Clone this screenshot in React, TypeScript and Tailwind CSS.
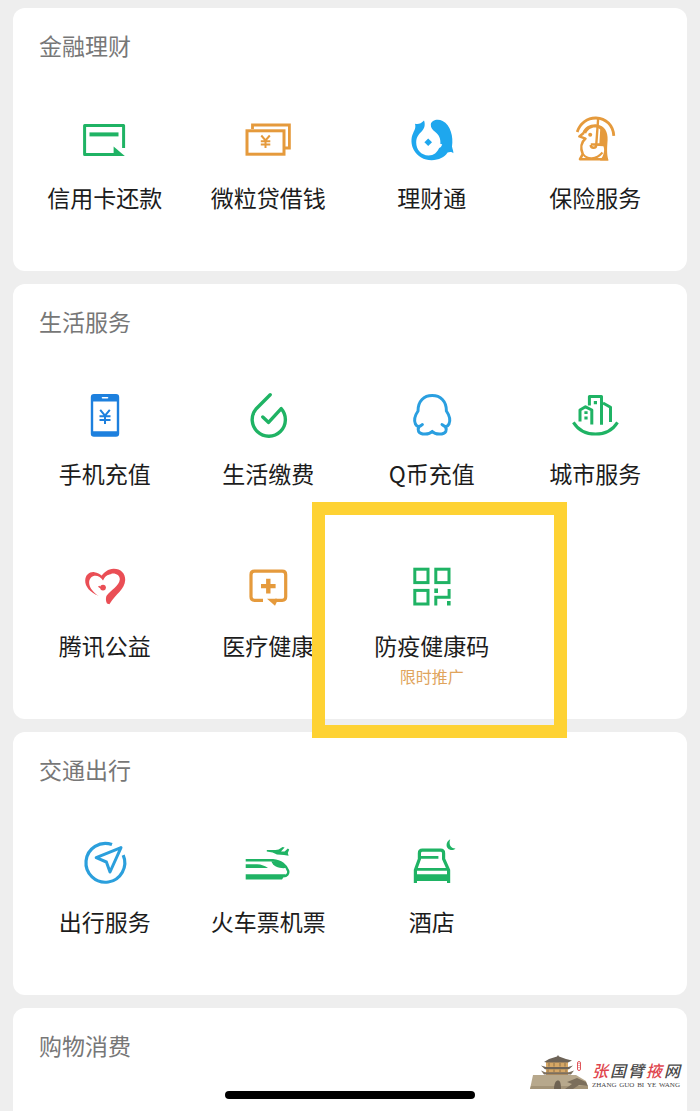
import type { ReactNode } from "react";
import { clsx } from "clsx";

type Service = {
  label: string;
  icon: ReactNode;
  note?: string;
  highlighted?: boolean;
};

type ServiceGroup = {
  title: string;
  items: Service[];
};

const GREEN = "#1fb364";
const ORANGE = "#e59a3c";
const SKY = "#1ea7ee";
const BLUE = "#1d80de";
const RED = "#ea4e55";

function Icon({ color, children }: { color: string; children: ReactNode }) {
  return (
    <svg
      viewBox="0 0 48 48"
      className="size-12 overflow-visible"
      fill="none"
      stroke={color}
      strokeWidth="3"
      aria-hidden="true"
    >
      {children}
    </svg>
  );
}

function CardIcon() {
  return (
    <Icon color={GREEN}>
      <path d="M42.6 32V9.5H3.6V38.5H36" strokeLinejoin="round" />
      <path d="M8.5 18.4H37.5" strokeWidth="4" />
      <path d="M32.6 30.5L43.8 40H32.6Z" fill={GREEN} stroke="none" />
    </Icon>
  );
}

function CashIcon() {
  return (
    <Icon color={ORANGE}>
      <path d="M8.5 13V9H45.4V32H41" strokeWidth="2.8" />
      <rect x="3" y="14.8" width="37" height="23.4" />
      <path d="M17.3 19.5L21.5 24.5L25.8 19.5M21.5 24.5V32M16.8 25.3H26.3M16.8 28.6H26.3" strokeWidth="2" />
    </Icon>
  );
}

function FishIcon() {
  return (
    <Icon color={SKY}>
      <path
        d="M16 4.6C13 7.8 10.5 8.4 7 7.8C8 12 6.6 14 5.2 17C2.6 22 3 29 5.8 34C9.3 40.5 16 44.2 23.6 44.2C31 44.2 36.5 41.2 39.6 36.6C42 35.5 44 36 45.4 37.2C45.4 34.5 44.4 33 44 30.5C45.6 21 42.6 9 34.6 5C29.5 2.5 23.3 4.4 22.8 8.4C22.6 11.6 24.4 13.6 27 15.8C31 19 32.8 22.5 32.4 28L34.2 28.2C33.5 30.8 32.4 31.5 31.2 32C29 36.5 26 39.4 20.5 39.4C13 39.4 8.2 33.5 8.2 26.5C8.2 21.5 10.6 18.5 13.4 15.8C16.4 12.8 17.6 9 16 4.6Z"
        fill={SKY}
        stroke="none"
      />
      <path d="M20.2 22.4L24 26.2L20.2 30L16.4 26.2Z" fill={SKY} stroke="none" />
    </Icon>
  );
}

function UmbrellaIcon() {
  return (
    <Icon color={ORANGE}>
      <path d="M6.2 16C9 7 16.5 1.8 25 2C35 2.2 42.2 9.5 42.8 19.8" strokeWidth="2.8" />
      <path d="M27.2 2L25.2 29.5C24.8 32.6 20 32.6 19.6 29" strokeWidth="2.4" />
      <path d="M11.5 16.5C13.5 10.5 20 7.6 26 8.4C33.5 9.6 37 15.5 36.6 24C36.2 31 35.4 38 37.6 44.4H29C33 39.5 34 34 32.4 30.2L19.8 29.6V27.2H28.4L29.2 13.6C24.6 9.8 17.6 11.6 15.2 17.6Z" fill={ORANGE} stroke="none" />
      <path d="M13 16.8L8.4 20.4L14.5 22.6C10.5 26 9 32 11.8 38.2L9 43.2H37" strokeWidth="2.6" strokeLinejoin="round" />
      <path d="M12 38C16 43.8 25 44 31.5 36.5" strokeWidth="2" />
      <circle cx="19.2" cy="18.8" r="2" fill={ORANGE} stroke="none" />
    </Icon>
  );
}

function PhoneIcon() {
  return (
    <Icon color={BLUE}>
      <path
        d="M13 2H35Q38.2 2 38.2 5.2V41.5Q38.2 44.7 35 44.7H13Q9.8 44.7 9.8 41.5V5.2Q9.8 2 13 2ZM12.2 9.6V39.2H35.8V9.6Z"
        fill={BLUE}
        fillRule="evenodd"
        stroke="none"
      />
      <path d="M21.5 5.8H26.5" stroke="#fff" strokeWidth="1.6" strokeLinecap="round" />
      <path d="M19.2 17.8L24 23.6L28.8 17.8M24 23.6V32M18.5 24.2H29.5M18.5 28H29.5" strokeWidth="2" />
    </Icon>
  );
}

function DropIcon() {
  return (
    <Icon color={GREEN}>
      <path
        d="M26.2 2.8L12 17A16.6 16.6 0 1 0 37.2 16.6L24.6 30.4L18.8 25"
        strokeWidth="3.4"
        strokeLinecap="round"
        strokeLinejoin="round"
      />
    </Icon>
  );
}

function PenguinIcon() {
  return (
    <Icon color="#2a9fe0">
      <path
        d="M14.4 32.6C10.6 34.2 9.6 37 10.6 39.4C12.5 42.8 21 43 24.2 39.4C27.4 43 35.9 42.8 37.8 39.4C38.8 37 37.8 34.2 34 32.6C36.6 35.4 39.5 35 41 32C43 27.4 40.8 22.5 38.4 19C38.4 9 32.4 3.6 24.2 3.6C16 3.6 10 9 10 19C7.6 22.5 5.4 27.4 7.4 32C8.9 35 11.8 35.4 14.4 32.6Z"
        strokeLinejoin="round"
      />
    </Icon>
  );
}

function CityIcon() {
  return (
    <Icon color={GREEN}>
      <path d="M9 29.5V18L14.5 14.8L20.8 18V32.5" strokeLinejoin="round" />
      <path d="M18.4 13.5V4.4H30.5V32.8" strokeLinejoin="round" />
      <path d="M32 11L39.5 15.3V30" strokeLinejoin="round" />
      <path d="M2.4 30.4C12 46 37 46 46.5 30.4" />
      <path d="M24.4 9V12.2M15 19.2V22M15 24.6V27.4" strokeWidth="3.2" />
    </Icon>
  );
}

function HeartIcon() {
  return (
    <Icon color={RED}>
      <path
        d="M17.5 31.8C9 28.5 4 22.5 4.2 16.5C4.5 10.5 9 7.5 13.5 8.2C16.5 8.6 18.8 9.8 20.8 11.8C23.5 8 27 5 32.5 4.8C39.5 4.6 44.5 9.5 44.2 16C43.8 25.5 35 29.5 28.4 40.2L26 39.5C24.8 37 24.6 34.5 25.4 32C30 25.5 38 22.5 38.8 15.5C39 11.2 35 9 30.5 9.6C26.5 10.2 23.5 13 22 16.5C19.5 12.5 15.5 10.8 12 12.2C6 15 6.5 24.5 17.5 31.8Z"
        fill={RED}
        stroke="none"
      />
      <path d="M20.8 12C24 12 26.5 9 30.5 9" strokeWidth="2" />
      <path d="M17.6 22.2C18.6 23.4 20 24 22 23.6" strokeWidth="1.6" />
      <circle cx="22" cy="23.6" r="2.9" fill={RED} stroke="none" />
    </Icon>
  );
}

function MedicalIcon() {
  return (
    <Icon color={ORANGE}>
      <path
        d="M19 36.3H10.5Q7 36.3 7 32.8V10.7Q7 7.2 10.5 7.2H38.2Q41.7 7.2 41.7 10.7V32.8Q41.7 36.3 38.2 36.3H31"
        strokeWidth="3.2"
      />
      <path d="M24.3 14.8V29.4M17 22.1H31.6" strokeWidth="4.4" />
      <path d="M23 34.7H33V37.5L31 41.8Z" fill={ORANGE} stroke="none" />
    </Icon>
  );
}

function QrIcon() {
  return (
    <Icon color={GREEN}>
      <rect x="6.8" y="5.2" width="13.2" height="13.4" />
      <rect x="27.8" y="5.2" width="13.2" height="13.4" />
      <rect x="6.8" y="26.4" width="13.2" height="13.6" />
      <path d="M27.8 41.6V33.2H41.1V25" />
      <path d="M26.3 26.8H30M39 39.3H42.6" strokeWidth="4.4" />
    </Icon>
  );
}

function TravelIcon() {
  return (
    <Icon color="#2b9fdc">
      <path d="M31 4.6A19.4 19.4 0 1 0 42.2 15.2" strokeWidth="3.2" />
      <path d="M40 7.6L15.2 17.7L25.4 22L29 32Z" strokeWidth="3" strokeLinejoin="round" />
    </Icon>
  );
}

function TrainIcon() {
  return (
    <Icon color={GREEN}>
      <path d="M1.7 20.2H29C37 20.8 42.4 25.6 44.2 31C44.8 33.8 43 36 39.4 36.4" strokeWidth="2.4" />
      <path d="M1.7 34.2H41.5L38 39.4H1.7Z" fill={GREEN} stroke="none" />
      <path d="M1.7 24.2H13C17.5 24.4 21 25.8 24 28H1.7Z" fill={GREEN} stroke="none" />
      <path d="M27.4 21.3H34.5C37.5 22.5 40.4 25 42 28C36 28.8 28.6 26.5 27.4 21.3Z" fill={GREEN} stroke="none" />
      <path d="M22.8 10H31.6L34.6 9.4L38.6 7L40.6 7.6L37 11.6L40.6 11.4L43.8 8.6L45.2 9.4L43.8 13L44.6 15.8L40 15L33 14.4L28.6 12.4L22.8 11.4Z" fill={GREEN} stroke="none" />
    </Icon>
  );
}

function HotelIcon() {
  return (
    <Icon color={GREEN}>
      <path d="M7.4 43V30L11.4 19V13.2Q11.4 10.2 14.4 10.2H32.6Q35.6 10.2 35.6 13.2V19L40.6 30V43" strokeWidth="3.2" />
      <path d="M12 17.4H30.4M7.2 29.4H40.8" strokeWidth="2.8" />
      <path d="M6 34.2H42V41H6Z" fill={GREEN} stroke="none" />
      <path d="M42.2 -0.8C38.2 1.5 37.6 6 40 8.6C42 10.6 45.5 10.6 47.5 8.4C42.5 8.5 40.5 4 42.2 -0.8Z" fill={GREEN} stroke="none" />
    </Icon>
  );
}

const groups: ServiceGroup[] = [
  {
    title: "金融理财",
    items: [
      { label: "信用卡还款", icon: <CardIcon /> },
      { label: "微粒贷借钱", icon: <CashIcon /> },
      { label: "理财通", icon: <FishIcon /> },
      { label: "保险服务", icon: <UmbrellaIcon /> },
    ],
  },
  {
    title: "生活服务",
    items: [
      { label: "手机充值", icon: <PhoneIcon /> },
      { label: "生活缴费", icon: <DropIcon /> },
      { label: "Q币充值", icon: <PenguinIcon /> },
      { label: "城市服务", icon: <CityIcon /> },
      { label: "腾讯公益", icon: <HeartIcon /> },
      { label: "医疗健康", icon: <MedicalIcon /> },
      { label: "防疫健康码", icon: <QrIcon />, note: "限时推广", highlighted: true },
    ],
  },
  {
    title: "交通出行",
    items: [
      { label: "出行服务", icon: <TravelIcon /> },
      { label: "火车票机票", icon: <TrainIcon /> },
      { label: "酒店", icon: <HotelIcon /> },
    ],
  },
  { title: "购物消费", items: [] },
];

function ServiceItem({ item }: { item: Service }) {
  return (
    <button
      type="button"
      className="relative flex min-h-32 flex-col items-center whitespace-nowrap"
    >
      {item.icon}
      <span className="mt-[17px] text-[23px] leading-8 text-[#1c1c1c]">
        {item.label}
      </span>
      {item.note && (
        <span className="text-base leading-[30px] text-[#e0a45c]">
          {item.note}
        </span>
      )}
      {item.highlighted && (
        <span className="pointer-events-none absolute -top-[62px] -right-[53px] -bottom-[46px] -left-[38px] z-10 border-[13px] border-[#fed233]" />
      )}
    </button>
  );
}

function GroupCard({ group }: { group: ServiceGroup }) {
  const empty = group.items.length === 0;
  return (
    <section
      className={clsx(
        "bg-white px-[10px] pt-[21px]",
        empty ? "min-h-[102px] flex-1 rounded-t-xl" : "rounded-xl pb-[27px]",
      )}
    >
      <h2 className="px-4 text-[23px] leading-8 text-[#777]">{group.title}</h2>
      {!empty && (
        <div className="mt-[55px] grid grid-cols-4 gap-y-11">
          {group.items.map((item) => (
            <ServiceItem key={item.label} item={item} />
          ))}
        </div>
      )}
    </section>
  );
}

function SiteMark() {
  return (
    <div className="absolute right-5 bottom-[21px] flex items-end gap-1">
      <svg viewBox="0 0 58 35" className="h-[35px] w-[58px]" aria-hidden="true">
        <path d="M0 34L3 20H46L56 26L58 34Z" fill="#b7a88c" />
        <path d="M0 34L1 31H58V34Z" fill="#a39377" />
        <path d="M24 34C24 28 26 25.5 28 25.5C30 25.5 31 28 31 34Z" fill="#6f6353" />
        <path d="M35 34L42 29L37 27L47 23L56 27L58 31L49 30L43 34Z" fill="#7b6e5b" />
        <rect x="16" y="7" width="22" height="13" fill="#d6a765" />
        <path d="M14 7L19 4L27 1.6L28 0L29 1.6L36 4L42 5.5L38 7.6H17Z" fill="#6d6357" />
        <path d="M11 10.5L16 12H38L43 10.5L39 14.2H15Z" fill="#6d6357" />
        <path d="M11 15.6L15 17.2H39L44 15.6L41 19.4H14Z" fill="#7c6f5e" />
        <path d="M19 8V11.5M24 8V11.5M30 8V11.5M35 8V11.5M18 14.5V17M24 14.5V17M30 14.5V17M36 14.5V17" stroke="#8d7148" />
        <rect x="47.5" y="6.5" width="3" height="9" rx="1.5" fill="none" stroke="#e0565c" />
        <path d="M49 8V14" stroke="#e0565c" strokeDasharray="1 1" />
      </svg>
      <div className="flex w-[88px] flex-col">
        <p className="flex justify-between text-base leading-5 font-medium text-[#4a4a4a] italic">
          <span className="text-[#e0464e]">张</span>
          <span>国</span>
          <span>臂</span>
          <span className="text-[#e0464e]">掖</span>
          <span>网</span>
        </p>
        <p className="flex justify-between font-['Liberation_Serif',serif] text-[7px] leading-[10px] text-[#444]">
          <span>ZHANG</span>
          <span>GUO</span>
          <span>BI</span>
          <span>YE</span>
          <span>WANG</span>
        </p>
      </div>
    </div>
  );
}

export default function App() {
  return (
    <main className="relative flex min-h-screen flex-col gap-[13px] bg-[#eee] px-[13px] pt-2 font-['Noto_Sans_CJK_SC',sans-serif]">
      {groups.map((group) => (
        <GroupCard key={group.title} group={group} />
      ))}
      <SiteMark />
      {/* Home indicator */}
      <div className="absolute bottom-3 left-1/2 h-2 w-[250px] -translate-x-1/2 rounded-full bg-black" />
    </main>
  );
}
